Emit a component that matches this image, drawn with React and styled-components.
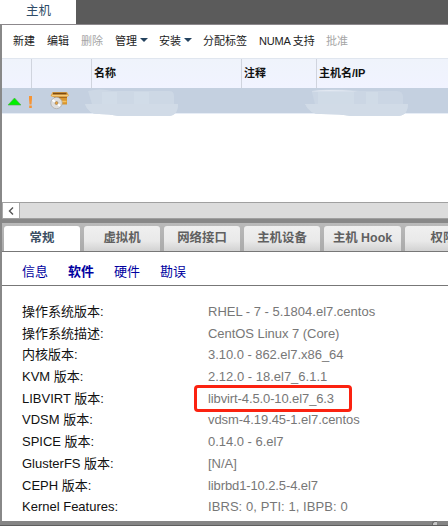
import React from "react";
import styled, { createGlobalStyle } from "styled-components";

const Global = createGlobalStyle`
  * { box-sizing: border-box; }
  html, body { margin: 0; padding: 0; overflow: hidden; }
  body { font-family: "Liberation Sans", "Noto Sans CJK SC", sans-serif; background: #fff; }
`;
const Page = styled.div`
  width: 448px; height: 526px; overflow: hidden; background: #888;
  display: flex; flex-direction: column;
`;
const TopBar = styled.header`
  height: 24px; flex: none; background: #5b5b5b; display: flex;
`;
const TopTab = styled.div`
  width: 76px; background: #fff; color: #2f4d68; font-size: 12.5px; line-height: 22px;
  padding-left: 26px; white-space: nowrap;
`;
const Main = styled.main`
  height: 497px; flex: none; border-left: 2px solid #888; border-top: 1px solid #8c888c;
  background: #fff; display: flex; flex-direction: column; overflow: hidden;
`;
const Toolbar = styled.nav`
  height: 33px; flex: none; display: flex; padding-left: 11px; white-space: nowrap;
`;
const Tool = styled.div`
  width: ${(p) => p.$w}px; flex: none; display: flex; align-items: center; gap: 3px;
  padding-bottom: 3px; font-size: 11px; color: ${(p) => (p.$off ? "#a5a5a5" : "#222")};
  letter-spacing: ${(p) => p.$ls || 0}px;
`;
const Caret = styled.i`
  border: 4px solid transparent; border-top: 4px solid #24425f; border-bottom: 0;
`;
const HeadRow = styled.div`
  height: 30px; flex: none; display: flex; background: linear-gradient(#eff3fb, #f1f3ff);
  border-top: 1px solid #e0e6ef;
`;
const HeadCell = styled.div`
  width: ${(p) => p.$w}px; flex: none; border-right: 1px solid #d0d4de; padding-left: 2px;
  font-size: 11px; font-weight: 700; line-height: 29px; color: #111; white-space: nowrap;
  &:last-child { border-right: 0; }
`;
const HostRow = styled.div`
  height: 26px; flex: none; background: #c4d0e0; border-bottom: 1px solid #e7edf6;
  display: flex; align-items: flex-start;
`;
const RowArt = styled.svg`
  width: 446px; height: 29px; flex: none; display: block; overflow: visible;
`;
const Blank = styled.div`
  flex: 1;
`;
const Scroll = styled.div`
  height: 17px; flex: none; display: flex; border: solid #a0a0a0; border-width: 1px 0;
  background: #dcdcdc;
`;
const ScrollButton = styled.div`
  width: 18px; background: #fff; border: 1px solid #aaa; border-width: 0 1px 0 1px;
  display: flex; align-items: center; justify-content: center;
`;
const Splitter = styled.div`
  height: 4px; flex: none; background: #888;
`;
const TabStrip = styled.div`
  height: 29px; flex: none; display: flex; gap: 4px; padding: 3px 0 0 2px;
  background: linear-gradient(#bababa, #aaa); border-bottom: 1px solid #777;
`;
const Tab = styled.div`
  width: ${(p) => p.$w}px; flex: none; border-radius: 3px 3px 0 0; text-align: center;
  background: ${(p) => (p.$on ? "#fff" : "linear-gradient(#f0f0f0, #e9e9e9 60%, #d2d2d2)")};
  color: ${(p) => (p.$on ? "#3b4e63" : "#606060")};
  font-size: 12.4px; font-weight: 700; line-height: 24px; white-space: nowrap;
`;
const SubTabs = styled.div`
  height: 34px; flex: none; display: flex; padding-left: 20px; border-bottom: 1px solid #777;
`;
const SubTab = styled.div`
  width: 46px; flex: none; font-size: 13px; line-height: 39px; color: #0000a0;
  font-weight: ${(p) => (p.$on ? 700 : 400)};
`;
const Details = styled.dl`
  height: 235px; flex: none; margin: 0; padding: 15px 0 0 20px;
  display: grid; grid-template-columns: 186px 1fr; grid-auto-rows: 21.7px; align-content: start;
  font-size: 13px; line-height: 21px; white-space: nowrap;
`;
const Term = styled.dt`
  color: #111;
`;
const Value = styled.dd`
  margin: 0; color: #777; letter-spacing: ${(p) => p.$ls || 0}px; position: relative;
`;
const Mark = styled.span`
  position: absolute; left: -14px; top: -3px; width: 158px; height: 27px;
  border: 3px solid #fb2210; border-radius: 4px;
`;
const Footer = styled.footer`
  height: 5px; flex: none; background: #858585; border-bottom: 1px solid #5e5e5e;
  display: flex; justify-content: flex-end; padding-right: 11px;
`;
const Grip = styled.i`
  width: 5px; height: 4px; background: #c6c6c6; border: solid #686868; border-width: 1px 0 0 1px;
  border-radius: 3px 0 0 0;
`;

const tools = [
  ["新建", 34], ["编辑", 34], ["删除", 34, { off: true }], ["管理", 44, { menu: true }],
  ["安装", 44, { menu: true }], ["分配标签", 56], ["NUMA 支持", 67, { ls: -0.2 }], ["批准", 40, { off: true }],
];
const tabs = [["常规", 76], ["虚拟机", 76], ["网络接口", 76], ["主机设备", 76], ["主机 Hook", 77], ["权限", 76]];
const details = [
  ["操作系统版本:", "RHEL - 7 - 5.1804.el7.centos", 0],
  ["操作系统描述:", "CentOS Linux 7 (Core)", -0.04],
  ["内核版本:", "3.10.0 - 862.el7.x86_64", -0.05],
  ["KVM 版本:", "2.12.0 - 18.el7_6.1.1", 0],
  ["LIBVIRT 版本:", "libvirt-4.5.0-10.el7_6.3", -0.11],
  ["VDSM 版本:", "vdsm-4.19.45-1.el7.centos", -0.06],
  ["SPICE 版本:", "0.14.0 - 6.el7", -0.03],
  ["GlusterFS 版本:", "[N/A]", 0],
  ["CEPH 版本:", "librbd1-10.2.5-4.el7", -0.11],
  ["Kernel Features:", "IBRS: 0, PTI: 1, IBPB: 0", 0.07],
];

function HostRowArt() {
  return (
    <RowArt viewBox="2 88 446 29">
      <path d="M8 105 14.5 98 21 105Z" fill="#00f000" stroke="#52a84c" strokeWidth=".6" />
      <path d="M29 96h3v2.500l-.5 6h-2l-.5-6zM29.200 105.500h2.600v2.500h-2.600z" fill="#f79433" />
      <path d="M54 96h13v8.500H54z" fill="#d9962f" />
      <path d="M50.500 96 52.500 92h14.500l2 3.500-2 1.500H53z" fill="#e0a54a" />
      <path d="M53 93.500h13.500" stroke="#7c4b12" strokeWidth="1.600" />
      <path d="M52 95.500h16" stroke="#f6cd7c" />
      <path d="M54 97.500h13" stroke="#a86b1c" />
      <path d="M61 101.500h5.500" stroke="#f4c261" strokeWidth="1.500" />
      <circle cx="56.500" cy="103" r="5.700" fill="#dedede" stroke="#aaa9a5" strokeWidth=".7" />
      <path d="m52.500 100 4 3M56.500 103l3.500 3" stroke="#fff" strokeWidth="2" />
      <circle cx="56.500" cy="103" r="1.500" fill="#eda43c" stroke="#87765a" strokeWidth=".6" />
      <path d="M88 91Q100 88 112 91H169Q174 91 174 96V104H178Q178 116 168 116H119Q109 114 99 114 88 114 85 104H92Z" fill="#cdd8e5" />
      <path d="M85 104H178Q178 116 168 116H119Q109 114 99 114 88 114 85 104Z" fill="#d1dbe7" />
      <path d="M102 92h15v12h-15zM134 92h15v12h-15z" fill="#d1dce8" />
      <path d="M312 92Q323 88 351 90L360 91H397Q403 91 403 97V104H408Q408 116 397 116H351Q342 114 321 114 309 114 305 104H315Z" fill="#cbd6e4" />
      <path d="M305 104H408Q408 116 397 116H351Q342 114 321 114 309 114 305 104Z" fill="#d1dbe7" />
      <path d="M318 92h36v12h-36zM366 92h12v12h-12z" fill="#d0dbe7" />
      <path d="M312 91Q328 89 358 91.500H312Z" fill="#e2e8f1" />
    </RowArt>
  );
}

export default function App() {
  return (
    <>
      <Global />
      <Page>
        <TopBar><TopTab>主机</TopTab></TopBar>
        <Main>
          <Toolbar>
            {tools.map(([label, w, o = {}]) => (
              <Tool key={label} $w={w} $off={o.off} $ls={o.ls}>{label}{o.menu && <Caret />}</Tool>
            ))}
          </Toolbar>
          <HeadRow>
            <HeadCell $w={30} /><HeadCell $w={60} />
            <HeadCell $w={150}>名称</HeadCell>
            <HeadCell $w={75}>注释</HeadCell>
            <HeadCell $w={140}>主机名/IP</HeadCell>
          </HeadRow>
          <HostRow><HostRowArt /></HostRow>
          <Blank />
          <Scroll>
            <ScrollButton>
              <svg width="6" height="8" viewBox="0 0 6 8"><path d="M5 .5 1.500 4 5 7.500" fill="none" stroke="#555" strokeWidth="1.400" /></svg>
            </ScrollButton>
          </Scroll>
          <Splitter />
          <TabStrip>
            {tabs.map(([label, w], i) => <Tab key={label} $w={w} $on={i === 0}>{label}</Tab>)}
          </TabStrip>
          <SubTabs>
            {["信息", "软件", "硬件", "勘误"].map((s) => <SubTab key={s} $on={s === "软件"}>{s}</SubTab>)}
          </SubTabs>
          <Details>
            {details.map(([term, value, ls], i) => (
              <React.Fragment key={term}>
                <Term>{term}</Term>
                <Value $ls={ls}>{value}{i === 4 && <Mark />}</Value>
              </React.Fragment>
            ))}
          </Details>
        </Main>
        <Footer><Grip /></Footer>
      </Page>
    </>
  );
}
